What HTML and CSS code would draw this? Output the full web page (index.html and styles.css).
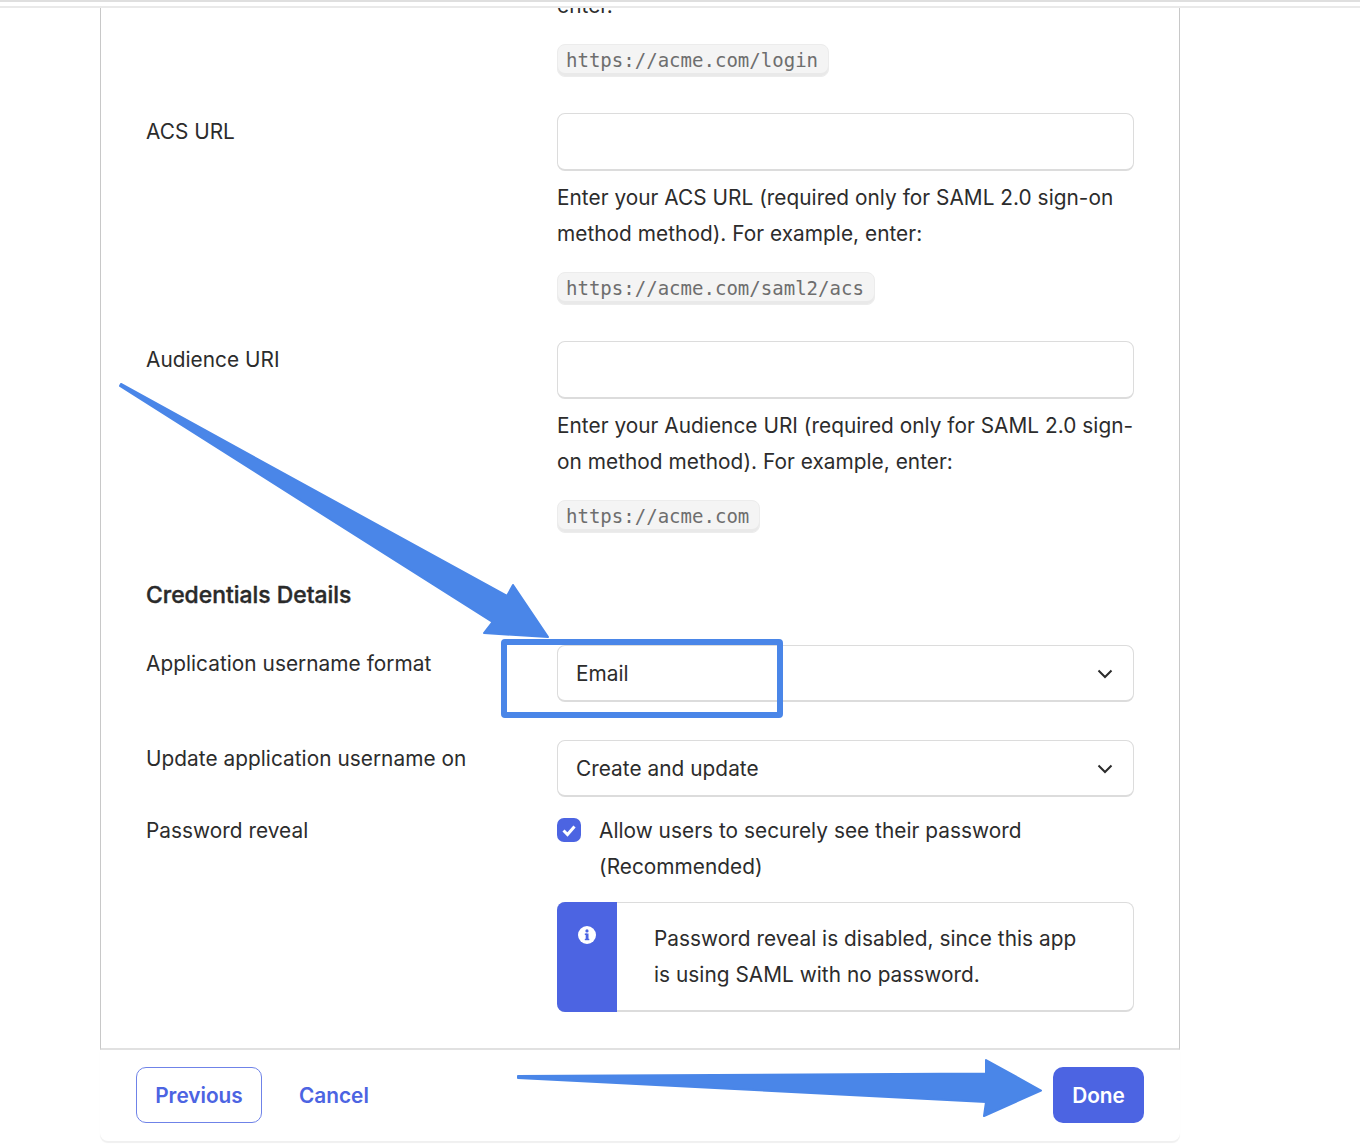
FILE: index.html
```html
<!DOCTYPE html>
<html lang="en">
<head>
<meta charset="utf-8">
<title>SAML settings</title>
<link rel="stylesheet" href="styles.css">
</head>
<body>
<div class="topline"></div>
<div class="topline2"></div>
<main class="wrap">
  <section class="card">
    <div class="row row-first">
      <div></div>
      <div class="field">
        <div class="clip"><p class="help">enter.</p></div>
        <code class="code">https://acme.com/login</code>
      </div>
    </div>
    <div class="row row-url">
      <label class="label">ACS URL</label>
      <div class="field">
        <div class="input"></div>
        <p class="help help-gap">Enter your ACS URL (required only for SAML 2.0 sign-on method method). For example, enter:</p>
        <code class="code">https://acme.com/saml2/acs</code>
      </div>
    </div>
    <div class="row row-url">
      <label class="label">Audience URI</label>
      <div class="field">
        <div class="input"></div>
        <p class="help help-gap">Enter your Audience URI (required only for SAML 2.0 sign-on method method). For example, enter:</p>
        <code class="code">https://acme.com</code>
      </div>
    </div>
    <h2 class="heading">Credentials Details</h2>
    <div class="row row-select">
      <label class="label">Application username format</label>
      <div class="select"><span>Email</span>
        <svg class="chev" viewBox="0 0 16 10" width="16" height="10"><path d="M1.500 1.500 8 8l6.500-6.500" fill="none" stroke="#2b2b2b" stroke-width="2"/></svg>
      </div>
    </div>
    <div class="row row-select2">
      <label class="label">Update application username on</label>
      <div class="select"><span>Create and update</span>
        <svg class="chev" viewBox="0 0 16 10" width="16" height="10"><path d="M1.500 1.500 8 8l6.500-6.500" fill="none" stroke="#2b2b2b" stroke-width="2"/></svg>
      </div>
    </div>
    <div class="row row-check">
      <label class="label">Password reveal</label>
      <div class="field">
        <div class="check">
          <span class="box"><svg viewBox="0 0 24 24" width="24" height="24"><path d="M6.500 12.500 10.500 16.500 17.500 8.500" fill="none" stroke="#fff" stroke-width="3"/></svg></span>
          <span class="check-text">Allow users to securely see their password (Recommended)</span>
        </div>
        <div class="alert">
          <div class="alert-band"><svg viewBox="0 0 18 18" width="18" height="18"><circle cx="9" cy="9" r="9" fill="#fff"/><rect x="7.700" y="7.500" width="2.800" height="6.500" fill="#4c64e2"/><rect x="6.800" y="7.500" width="2" height="1.500" fill="#4c64e2"/><rect x="6.800" y="12.800" width="4.500" height="1.400" fill="#4c64e2"/><circle cx="9" cy="4.900" r="1.600" fill="#4c64e2"/></svg></div>
          <p class="alert-text">Password reveal is disabled, since this app is using SAML with no password.</p>
        </div>
      </div>
    </div>
  </section>
  <footer class="footer">
    <div class="actions">
      <button class="btn btn-outline">Previous</button>
      <button class="btn btn-link">Cancel</button>
    </div>
    <button class="btn btn-primary">Done</button>
  </footer>
</main>
<svg class="annot" viewBox="0 0 1360 1146" width="1360" height="1146" aria-hidden="true">
  <g fill="#4a86e8" stroke="#4a86e8" stroke-width="2" stroke-linejoin="round">
    <path d="M121 384 507 596 513 585 548 637 484 633 492.500 622 120 386Z"/>
    <path d="M518 1076 986 1073.500 986 1060 1041 1090.500 984 1116 986 1102 518 1078Z"/>
  </g>
  <rect class="annot-box" x="504" y="642" width="276" height="73" rx="1"/>
</svg>
</body>
</html>
```
FILE: styles.css
```css
* { box-sizing: border-box; }
html, body { margin: 0; padding: 0; background: #fff; }
body {
  height: 1146px;
  overflow: hidden;
  position: relative;
  font-family: Inter, "Liberation Sans", sans-serif;
  font-size: 20.8px;
  letter-spacing: 0.04px;
  line-height: 36px;
  color: #2c2c2c;
}
.topline { height: 2px; background: #dfdfdf; }
.topline2 { height: 2px; margin-top: 4px; background: #e9e9e9; }
.wrap { margin-left: 100px; width: 1080px; }
.card {
  height: 1042px;
  border-left: 1px solid #c8c8c8;
  border-right: 1px solid #c8c8c8;
  border-bottom: 2px solid #e1e1e1;
}
.row {
  display: grid;
  grid-template-columns: 411px 577px;
  padding-left: 45px;
}
.row-first { height: 105px; }
.row-url { height: 228px; }
.row-select { height: 95px; }
.row-select2 { height: 72px; }
.label { display: block; padding-top: 1px; }
.field { min-width: 0; }
.clip { height: 8px; margin-bottom: 26px; overflow: hidden; }
.help { margin: 0; }
.clip .help { margin-top: -20px; }
.help-gap { margin-top: 9px; margin-bottom: 18px; }
.code {
  display: inline-block;
  height: 33px;
  padding: 0 10px 0 8px;
  font-family: "DejaVu Sans Mono", monospace;
  font-size: 19.05px;
  letter-spacing: 0;
  line-height: 30px;
  color: #6e6e6e;
  background: #f4f4f4;
  border: 1px solid #ececec;
  border-radius: 8px;
  box-shadow: inset 0 -3px 0 #e9e9e9;
}
.input {
  height: 58px;
  border: 1px solid #dcdcdc;
  border-bottom-width: 2px;
  border-radius: 8px;
  background: #fff;
}
.heading {
  margin: 0;
  height: 76px;
  padding: 8px 0 0 45px;
  font-size: 22.880px;
  line-height: 36px;
  font-weight: 500;
  letter-spacing: 0;
  -webkit-text-stroke: 0.4px #2a2a2a;
  color: #2a2a2a;
}
.select {
  height: 57px;
  display: flex;
  align-items: center;
  justify-content: space-between;
  padding: 1px 20px 0 18px;
  border: 1px solid #dcdcdc;
  border-bottom-width: 2px;
  border-radius: 8px;
}
.check { display: flex; gap: 18px; }
.box {
  flex: none;
  width: 24px;
  height: 24px;
  margin-top: 6px;
  border-radius: 7px;
  background: #4c64e2;
}
.box svg { display: block; }
.check-text { flex: 1; margin-top: 1px; margin-bottom: -1px; }
.alert {
  display: flex;
  height: 110px;
  margin-top: 18px;
  border: 1px solid #dcdcdc;
  border-left: 0;
  border-bottom-width: 2px;
  border-radius: 8px;
}
.alert-band {
  flex: none;
  width: 60px;
  margin: -1px 0 -2px;
  padding: 24px 0 0 21px;
  background: #4c64e2;
  border-radius: 8px 0 0 8px;
}
.alert-band svg { display: block; }
.alert-text { margin: 0; padding: 18px 40px 0 37px; }
.footer {
  height: 91px;
  display: flex;
  justify-content: space-between;
  padding: 17px 36px 0 36px;
  border-radius: 0 0 8px 8px;
  box-shadow: 0 2px 1px #f0f0f0;
}
.actions { display: flex; gap: 37px; }
.btn {
  height: 56px;
  font-family: Inter, "Liberation Sans", sans-serif;
  font-size: 20.8px;
  font-weight: 600;
  border-radius: 10px;
  background: none;
  border: 0;
  padding: 0;
}
.btn-outline { width: 126px; color: #4c64e2; border: 1px solid #6f83e8; }
.btn-link { color: #4c64e2; }
.btn-primary { width: 91px; color: #fff; background: #4c64e2; }
.annot { position: absolute; left: 0; top: 0; pointer-events: none; }
.annot-box { fill: none; stroke: #4a86e8; stroke-width: 6; }
```
